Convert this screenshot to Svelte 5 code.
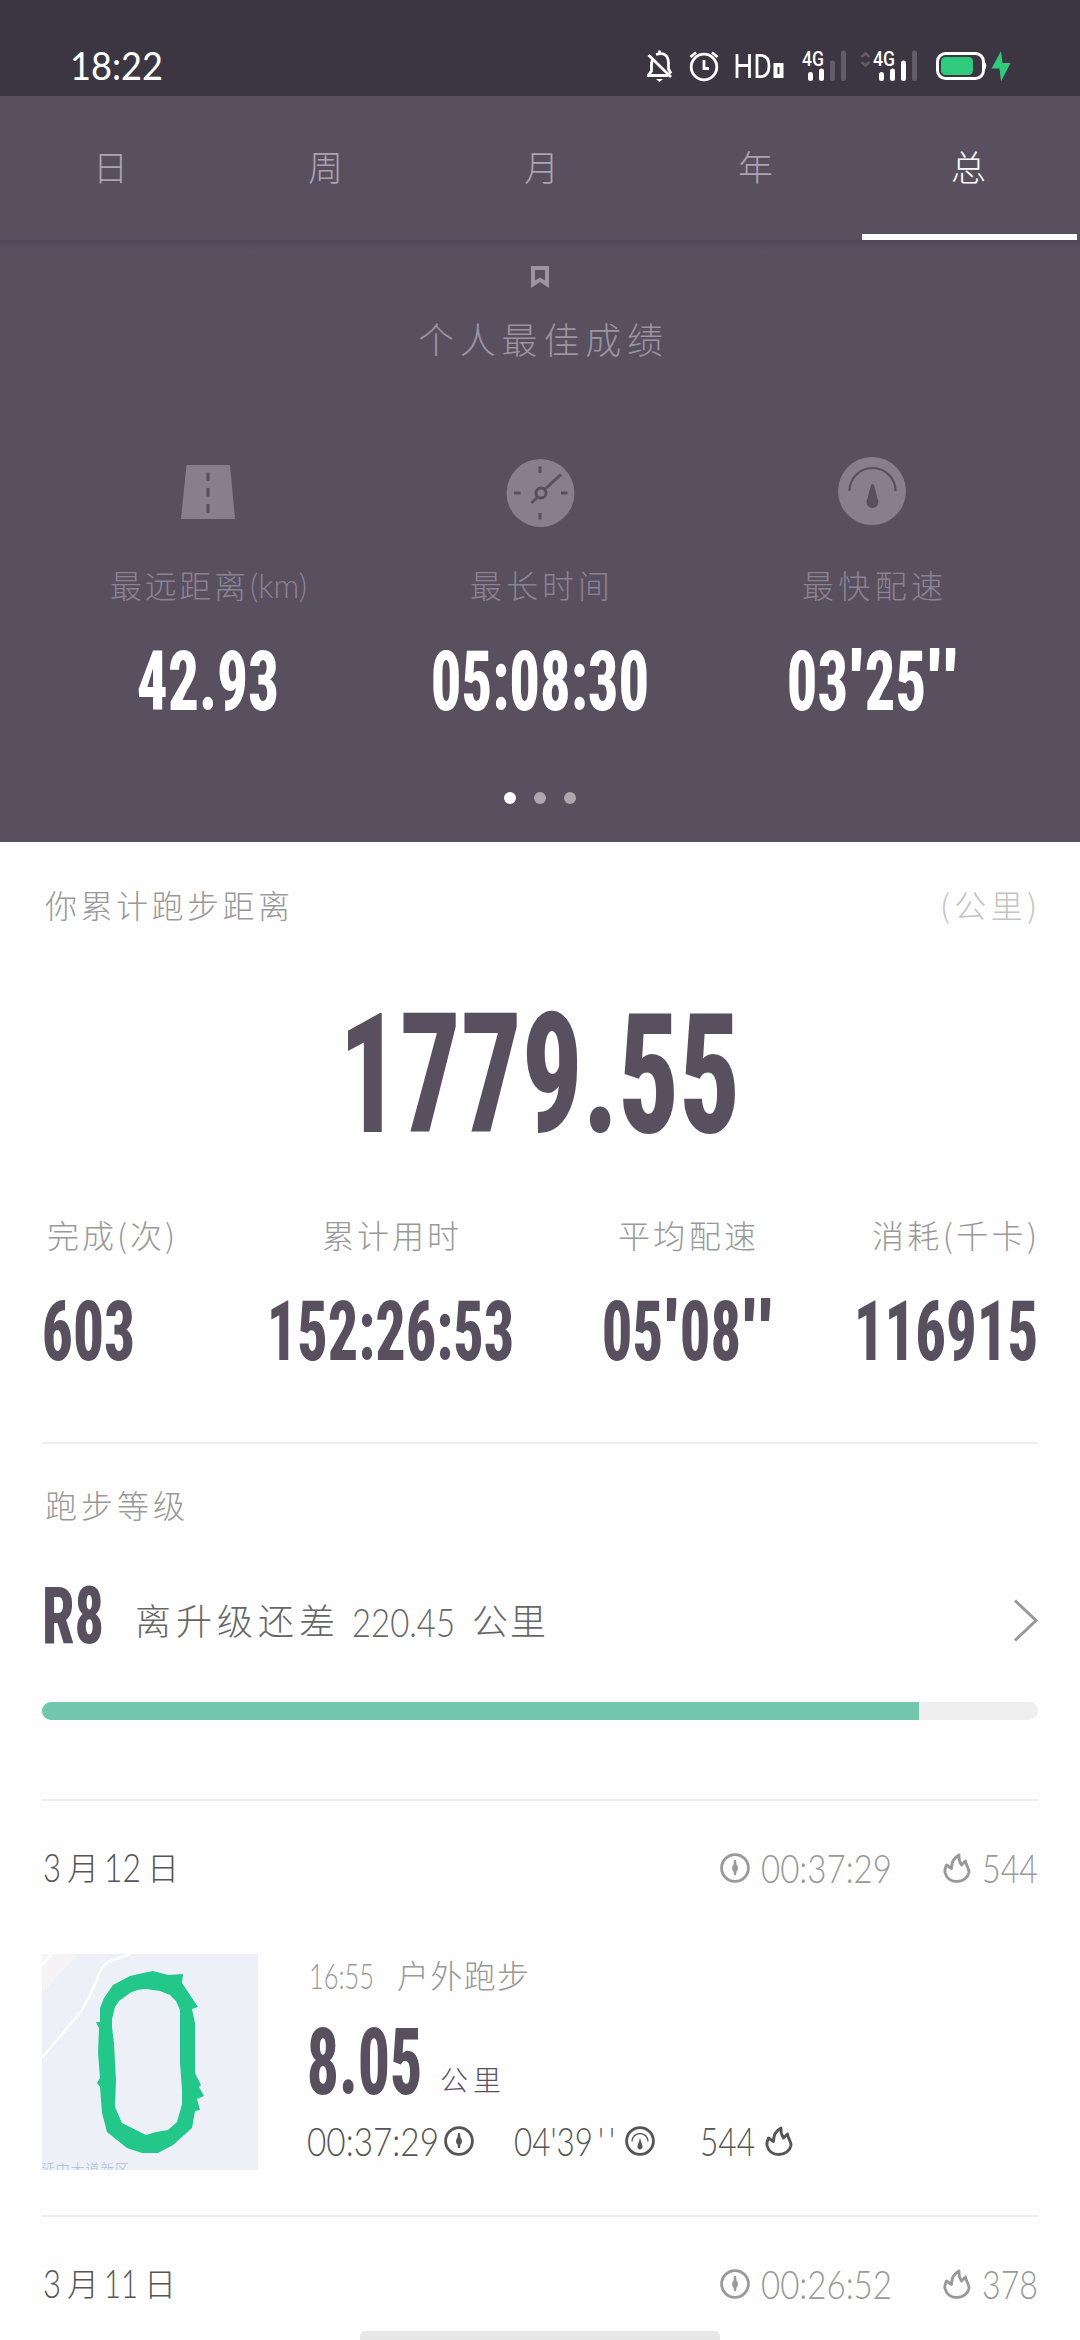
<script>
  const tabs = [
    { name: '日', w: 27 },
    { name: '周', w: 29 },
    { name: '月', w: 27 },
    { name: '年', w: 30 },
    { name: '总', w: 34, active: true }
  ];
  const best = [
    { icon: 'road', value: '42.93', w: 138 },
    { icon: 'clock', label: '最长时间', lw: 138, value: '05:08:30', w: 214 },
    { icon: 'gauge', label: '最快配速', lw: 139, pace: ['03', '25'] }
  ];
  const stats = [
    { label: '完成(次)', lw: 126, value: '603', w: 89, left: true },
    { label: '累计用时', lw: 135, value: '152:26:53', w: 243 },
    { label: '平均配速', lw: 136, pace: ['05', '08'] },
    { label: '消耗(千卡)', lw: 163, value: '116915', w: 180, right: true }
  ];
  const progress = 88.05;
</script>

{#snippet num(text, w, h = 61)}
  <svg class="num" width={w} height={h} role="img" aria-label={text}>
    <text x={-h * 0.035} y={h - 1} font-size={(h - 1) * 1.4} textLength={w + h * 0.07} lengthAdjust="spacingAndGlyphs">{text}</text>
  </svg>
{/snippet}

{#snippet paceNum(parts)}
  <div class="pacenum">
    {@render num(parts[0], 57)}{@render num("'", 9)}{@render num(parts[1], 57)}{@render num("'", 9)}<span class="second">{@render num("'", 9)}</span>
  </div>
{/snippet}

{#snippet thin(text, w, h = 29)}
  <svg class="thin" width={w} height={h}>
    <text x="-1" y={h} font-size={h * 1.38} textLength={w + 2} lengthAdjust="spacingAndGlyphs">{text}</text>
  </svg>
{/snippet}

{#snippet han(text, w, h = 32)}
  <svg class="han" width={w} height={h}>
    <text x="-1" y={h * 0.86} font-size={h} textLength={w + 2} lengthAdjust="spacing">{text}</text>
  </svg>
{/snippet}

{#snippet timer()}
  <svg class="ico" width="30" height="30" viewBox="0 0 30 30">
    <circle cx="15" cy="15" r="13.4" fill="none" stroke="currentColor" stroke-width="2.8" />
    <path d="M14 7H16L16.5 11.500Q18 13 18 15.500Q18 17.500 16.500 18.500L16 22H14L13.500 18.500Q12 17.500 12 15.500Q12 13 13.500 11.500Z" fill="currentColor" />
  </svg>
{/snippet}

{#snippet pace()}
  <svg class="ico" width="30" height="30" viewBox="0 0 30 30">
    <circle cx="15" cy="15" r="13.4" fill="none" stroke="currentColor" stroke-width="2.8" />
    <path d="M7 15.500a8 8 0 0 1 16 0" fill="none" stroke="currentColor" stroke-width="1.4" />
    <path d="M15 12L17.400 19.800a2.600 2.600 0 1 1-4.800 0Z" fill="currentColor" />
  </svg>
{/snippet}

{#snippet flame()}
  <svg class="ico" width="28" height="30" viewBox="0 0 28 30">
    <path d="M3.500 12C2 15 1.500 17 2 19.500C3.500 25.500 8 28.500 14 28.500C20 28.500 25 24.500 26 19.500C26.500 15.500 23 13 22.500 8L18.500 12C16.500 9 15.500 6 16 2C11 4.500 8.500 9 8.500 15.500Z" fill="none" stroke="currentColor" stroke-width="2.900" stroke-linejoin="round" />
  </svg>
{/snippet}

{#snippet day(date, dw, time, kcal)}
  <div class="day">
    <span class="date">{@render thin('3', 16, 28)}{@render han('月', 23)}{@render thin(date, dw, 28)}{@render han('日', 23)}</span>
    <span class="totals">
      {@render timer()}
      <span class="time">{@render thin(time, 129)}</span>
      {@render flame()}
      <span class="kcal">{@render thin(kcal, 54)}</span>
    </span>
  </div>
{/snippet}

<main class="page">
  <header class="status">
    <svg class="num clocktext" width="88" height="28"><text x="-3" y="28" font-size="39" textLength="93" lengthAdjust="spacingAndGlyphs">18:22</text></svg>
    <svg class="system" width="370" height="36" viewBox="642 48 370 36" fill="none" stroke="#fff" stroke-width="2.8">
      <path d="M652.500 60Q651.500 62 651.500 65V71L648.500 75V75.500H668" />
      <path d="M656 54.500Q668 51 668.500 63V69L671 73.500M659.500 50.500V54M648.500 55L671 77" />
      <path d="M656 79H663L659.500 82Z" fill="#fff" stroke="none" />
      <circle cx="704" cy="67" r="12.800" />
      <path d="M690.500 57L696 52.500M717.500 57L712 52.500M704 60V68.500H709" />
      <path d="M737 54V78M749.500 54V78M737 65.500H749.500M757 55.300V76.700H760Q769 76.700 769 66Q769 55.300 760 55.300Z" />
      <path d="M775.500 65H781.500V76H775.500Z" stroke-width="4" />
      <text class="net" x="802" y="66" textLength="22" lengthAdjust="spacingAndGlyphs">4G</text>
      <text class="net" x="873" y="66" textLength="22" lengthAdjust="spacingAndGlyphs">4G</text>
      <g stroke-width="5" stroke-linecap="round">
        <path d="M810.500 74.500V78.500M821.500 71V78.500M881.500 74.500V78.500M892.500 71V78.500M903.500 63V78.500" />
        <path d="M832.500 63V78.500M843.500 53V78.500M914.500 53V78.500" stroke="#625c68" />
      </g>
      <path d="M861.500 57L865.500 53.500L869.500 57M861.500 62L865.500 65.500L869.500 62" stroke="#625c68" />
      <rect x="937.500" y="53.500" width="46" height="25" rx="8" stroke-width="3" />
      <rect x="941" y="57" width="32" height="18" rx="4.500" fill="#2fca7b" stroke="none" />
      <path d="M984 62Q987 66 984 70Z" fill="#fff" stroke-width="1.500" />
      <path d="M1001 51L991.500 68.500H999.500L1001 81.500L1010.500 63H1002.500Z" fill="#2fca7b" stroke="none" />
    </svg>
  </header>

  <nav class="tabs">
    {#each tabs as tab}
      <button class:active={tab.active}>{@render han(tab.name, tab.w, 35)}</button>
    {/each}
  </nav>

  <section class="best">
    <svg class="bookmark" width="18" height="22" viewBox="0 0 18 22"><path fill-rule="evenodd" d="M0 0H18V22L9 16L0 22ZM4 4V14.500L9 11.500L14 14.500V4Z" fill="currentColor" /></svg>
    <h1>{@render han('个人最佳成绩', 243, 36)}</h1>
    <div class="records">
      {#each best as item}
        <article>
          <svg class="badge" width="68" height="68" viewBox="0 0 68 68">
            {#if item.icon === 'road'}
              <path d="M12.500 6H56L61 60H7Z" fill="#877f8e" />
              <path d="M34 13.500V22M34 29V37.500M34 45V54" stroke="#584f5f" stroke-width="3" />
            {:else if item.icon === 'clock'}
              <circle cx="34.500" cy="34" r="34" fill="#877f8e" />
              <g fill="none" stroke="#584f5f" stroke-width="3">
                <circle cx="35" cy="34" r="5" />
                <path d="M38.500 30.500L55 15.500M31 38.500L25.500 44M34 7.500V14M34 54V60.500M8 34H14.500M55 34H61.500" />
              </g>
            {:else}
              <circle cx="34" cy="32" r="34" fill="#877f8e" />
              <path d="M11.500 32a23 23 0 0 1 46 0" fill="none" stroke="#584f5f" stroke-width="2.200" />
              <path d="M34.500 25Q36 25 36.500 28L39.700 40A6 6 0 1 1 29.300 40L32.500 28Q33 25 34.500 25Z" fill="#584f5f" />
            {/if}
          </svg>
          <div class="label">
            {#if item.label}
              {@render han(item.label, item.lw)}
            {:else}
              {@render han('最远距离', 134)}{@render thin('(km)', 55, 24)}
            {/if}
          </div>
          <div class="value">
            {#if item.pace}{@render paceNum(item.pace)}{:else}{@render num(item.value, item.w)}{/if}
          </div>
        </article>
      {/each}
    </div>
    <div class="dots"><i class="on"></i><i></i><i></i></div>
  </section>

  <section class="content">
    <div class="caption">{@render han('你累计跑步距离', 243)}<span class="unit">{@render han('(公里)', 95)}</span></div>
    <div class="total">{@render num('1779.55', 393, 120)}</div>
    <div class="stats">
      {#each stats as s}
        <div class="stat" class:left={s.left} class:right={s.right}>
          {@render han(s.label, s.lw)}
          {#if s.pace}{@render paceNum(s.pace)}{:else}{@render num(s.value, s.w)}{/if}
        </div>
      {/each}
    </div>
    <hr />
    <div class="grade">{@render han('跑步等级', 138)}</div>
    <div class="level">
      {@render num('R8', 58, 58)}
      <span class="togo">{@render han('离升级还差', 198, 36)}{@render thin('220.45', 101, 29)}{@render han('公里', 72, 36)}</span>
      <svg class="chevron" width="25" height="43" viewBox="0 0 25 43"><path d="M2 1.500L23 21.500L2 41.500" fill="none" stroke="#999" stroke-width="3" /></svg>
    </div>
    <div class="bar"><div class="fill" style:width="{progress}%"></div></div>
    <hr />
    {@render day('12', 35, '00:37:29', '544')}
    <div class="run">
      <svg class="map" width="216" height="216" viewBox="0 0 216 216">
        <rect width="216" height="216" fill="#edf0f7" />
        <path d="M0 0H36L0 40Z" fill="#f5f3f5" />
        <path d="M0 104L40 56Q48 42 54 28Q59 12 66 8L88 0M0 11L10 0" fill="none" stroke="#fff" stroke-width="2.500" />
        <path fill="#23c78a" fill-rule="evenodd" d="M111 17L126 21L141 20L140 29L156 53L150 55L153 69V119L159 131L157 133L162 142L155 145L158 156L153 157L150 174L131 191L116 199H100L85 194L65 178L60 159L58 133L55 129L58 124L56 99L57 74L54 68H58V54L62 44L71 31L88 22L101 19ZM104 35Q96 35 88 39L77 47L73 53L70 65V73L72 89L74 126L73 153L80 169L104 181L114 178L126 176L135 168L140 150V136L138 109V56L134 47L128 41L118 37Z" />
        <text class="place" x="-1" y="220" textLength="88">延中大道新区</text>
      </svg>
      <div class="info">
        <div class="when">{@render thin('16:55', 63, 26)}{@render han('户外跑步', 130)}</div>
        <div class="dist">{@render num('8.05', 111, 67)}{@render han('公里', 59, 28)}</div>
        <div class="figures">
          {@render thin('00:37:29', 130)}{@render timer()}
          <span class="pace">{@render thin("04'39", 77)}{@render thin("'", 4)}{@render thin("'", 4)}</span>{@render pace()}
          <span class="burn">{@render thin('544', 53)}</span>{@render flame()}
        </div>
      </div>
    </div>
    <hr />
    {@render day('11', 32, '00:26:52', '378')}
  </section>
  <div class="home"></div>
</main>

<style>
  :global(body) { background: #fff; }
  .page { position: relative; width: 1080px; height: 2340px; overflow: hidden; background: #fefefe; font-family: Lato, "Noto Sans CJK SC", sans-serif; }
  svg { display: block; flex: none; overflow: visible; }
  text { fill: currentColor; stroke: none; }
  .num text { font-family: "Roboto Condensed", Roboto, sans-serif; font-weight: 800; }
  .thin text { font-family: Lato, sans-serif; font-weight: 300; }
  .han text { font-family: "Noto Sans CJK SC", sans-serif; font-weight: 300; }
  .status { box-sizing: border-box; height: 96px; padding: 48px 68px 0 73px; display: flex; justify-content: space-between; background: #3c3642; color: #fff; }
  .clocktext { margin-top: 4px; }
  .clocktext text { font-family: Lato, sans-serif; font-weight: 400; }
  .net { font: 500 20px Roboto, sans-serif; fill: #fff; }
  .tabs { display: flex; height: 144px; padding-right: 3px; background: #584f5f; }
  .tabs button { flex: 1; display: flex; justify-content: center; align-items: center; border: 0; border-bottom: 6px solid transparent; padding: 6px 0 0; background: none; color: #aca3b2; }
  .tabs button.active { color: #fff; border-color: #fff; }
  .best { box-sizing: border-box; height: 602px; padding: 26px 42px 0; display: flex; flex-direction: column; align-items: center; background: linear-gradient(#50475a, #584f5f 10px); color: #9b94a1; }
  h1 { margin: 35px 0 0; font-weight: 400; }
  .records { display: grid; grid-template-columns: repeat(3, 1fr); width: 100%; margin-top: 100px; }
  article { display: flex; flex-direction: column; align-items: center; }
  .label { display: flex; align-items: center; gap: 6px; margin: 43px 0 48px; color: #8b8392; }
  .value { color: #fff; }
  .pacenum { display: flex; gap: 6px; }
  .second { margin-left: 1px; }
  .dots { display: flex; gap: 18px; margin-top: 81px; }
  .dots i { width: 12px; height: 12px; border-radius: 50%; background: #aca7af; }
  .dots .on { background: #fff; }
  .content { padding: 48px 42px 0; color: #584f5f; }
  .caption { display: flex; justify-content: space-between; padding: 0 2px 0 4px; color: #999; }
  .unit { color: #c4c4c4; }
  .total { display: flex; justify-content: center; margin: 91px 0 87px; padding-right: 1px; }
  .stats { display: grid; grid-template-columns: 225px 335px 252px 180px; justify-items: start; padding-left: 2px; margin-bottom: 81px; }
  .stat { display: flex; flex-direction: column; align-items: center; gap: 48px; }
  .stat.left { align-items: flex-start; }
  .stat.left .han { margin-left: 4px; }
  .stat.right { align-items: flex-end; }
  .stat .han { color: #999; }
  hr { margin: 0; height: 2px; border: 0; background: #eee; }
  .grade { margin: 46px 0 64px 4px; color: #999; }
  .level { display: flex; align-items: center; height: 58px; padding-left: 2px; }
  .togo { display: flex; align-items: center; gap: 19px; margin: 14px auto 0 34px; color: #666; }
  .chevron { margin-top: 10px; }
  .bar { height: 18px; margin: 58px 0 79px; overflow: hidden; border-radius: 9px; background: #eee; }
  .fill { height: 18px; background: #72c7ac; }
  .day { display: flex; align-items: center; justify-content: space-between; height: 134px; color: #999; }
  .date { display: flex; align-items: center; gap: 14px; padding-left: 2px; color: #555; }
  .date .han { margin-left: -6px; }
  .totals { display: flex; align-items: center; padding-right: 1px; }
  .time { margin: 0 52px 0 12px; }
  .kcal { margin-left: 12px; }
  .run { display: flex; gap: 50px; margin: 19px 0 45px; }
  .map { overflow: hidden; }
  .place { font: 300 14px "Noto Sans CJK SC", sans-serif; fill: #a6bfd8; }
  .when { display: flex; align-items: center; gap: 25px; height: 32px; margin: 6px 0 36px 2px; color: #999; }
  .dist { display: flex; align-items: flex-end; gap: 21px; padding-left: 1px; }
  .figures { display: flex; align-items: center; margin-top: 31px; color: #555; }
  .figures > .ico { margin-left: 6px; }
  .pace { display: flex; gap: 7px; margin: 0 5px 0 41px; }
  .burn { margin: 0 5px 0 46px; }
  .home { position: absolute; left: 360px; bottom: 0; width: 360px; height: 9px; border-radius: 5px 5px 0 0; background: #e7e7e7; }
</style>
